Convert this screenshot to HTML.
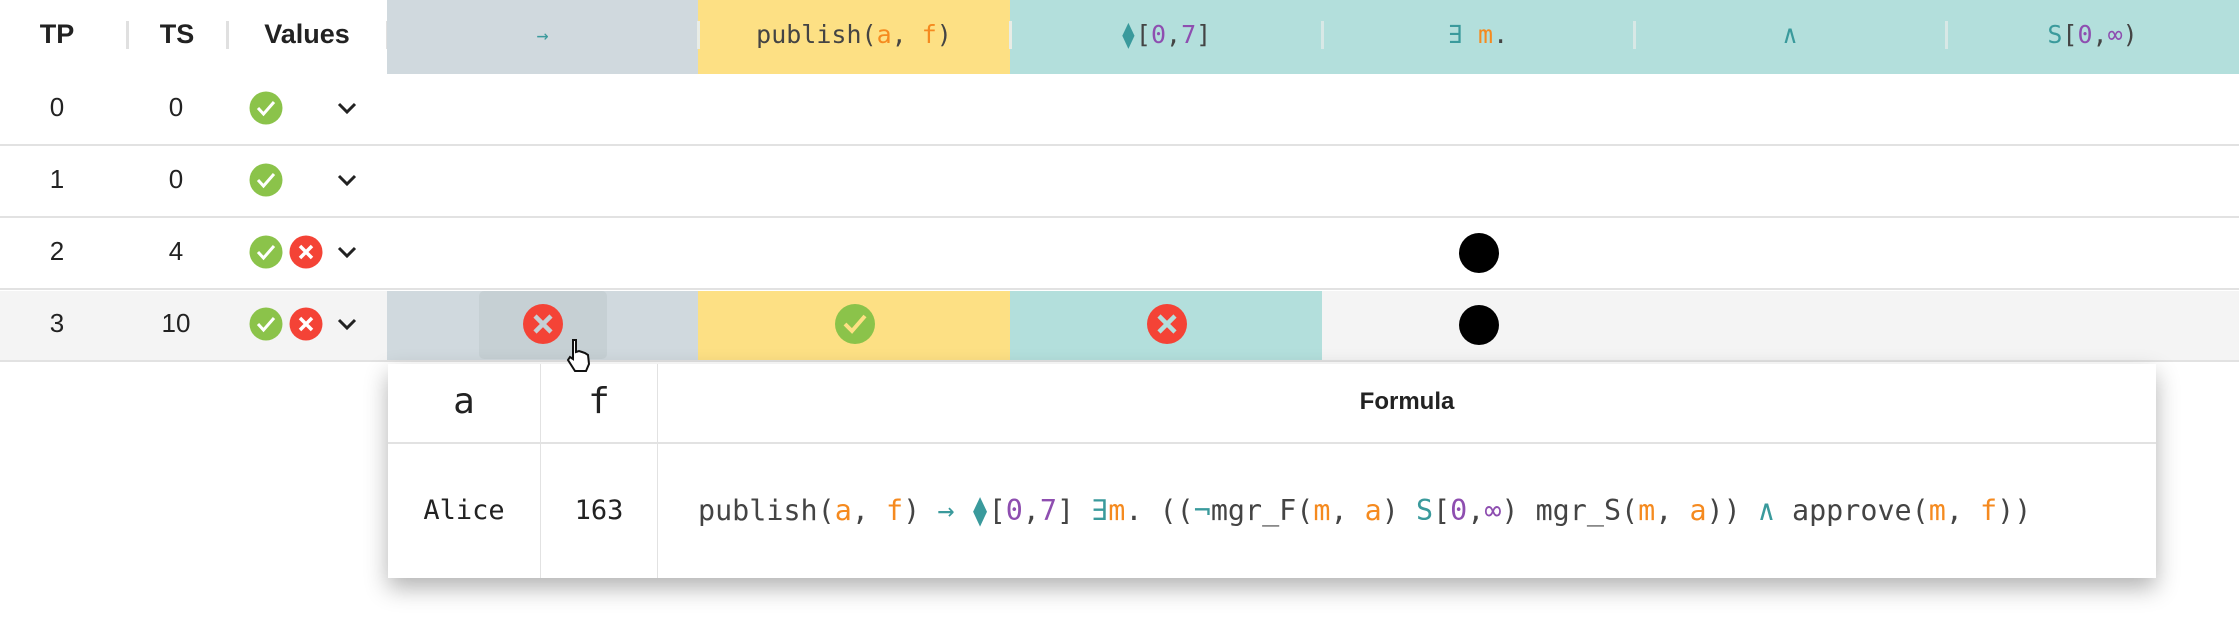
<!DOCTYPE html>
<html><head><meta charset="utf-8"><style>
body{margin:0;width:2239px;height:634px;background:#fff;position:relative;overflow:hidden;font-family:"Liberation Sans",sans-serif;color:#222}
.a{position:absolute}
.mono{font-family:"DejaVu Sans Mono","Liberation Mono",monospace}
.o{color:#f58a1f}.p{color:#8e4eb0}.t{color:#3a9a9c}.k{color:#444}
.hd{position:absolute;top:0;height:74px;line-height:70px;text-align:center;font-size:25px;color:#444}
.div{position:absolute;top:21px;width:3px;height:28px;background:#e0e0e0}
.line{position:absolute;left:0;width:2239px;height:2px;background:#e2e2e2}
.num{position:absolute;font-size:26px;text-align:center;width:100px;color:#222}
</style></head><body>
<div class="a" style="left:14px;width:86px;top:0;line-height:68px;text-align:center;font-weight:bold;font-size:27px">TP</div>
<div class="a" style="left:128px;width:98px;top:0;line-height:68px;text-align:center;font-weight:bold;font-size:27px">TS</div>
<div class="a" style="left:229px;width:156px;top:0;line-height:68px;text-align:center;font-weight:bold;font-size:27px">Values</div>
<div class="div" style="left:126px"></div><div class="div" style="left:226px"></div><div class="div" style="left:386px"></div>
<div class="hd mono" style="left:387px;width:311px;background:#d0d9de;font-size:20px"><span class="t">→</span></div>
<div class="hd mono" style="left:698px;width:312px;background:#fde084">publish(<span class="o">a</span>, <span class="o">f</span>)</div>
<div class="hd mono" style="left:1010px;width:1229px;background:#b3dfdc"></div>
<div class="hd mono" style="left:1010px;width:312px;"><span class="t">⧫</span>[<span class="p">0</span>,<span class="p">7</span>]</div>
<div class="hd mono" style="left:1322px;width:312px;"><span class="t">∃</span> <span class="o">m</span>.</div>
<div class="hd mono" style="left:1634px;width:312px;"><span class="t">∧</span></div>
<div class="hd mono" style="left:1946px;width:293px;"><span class="t">S</span>[<span class="p">0</span>,<span class="p">∞</span>)</div>
<div class="div" style="left:1321px;background:#d8e8e6"></div><div class="div" style="left:1633px;background:#d8e8e6"></div><div class="div" style="left:1945px;background:#d8e8e6"></div>
<div class="div" style="left:697px;background:#e8ece6"></div><div class="div" style="left:1009px;background:#e8ece6"></div>

<div class="a" style="left:0;top:291px;width:2239px;height:70px;background:#f4f4f4"></div>
<div class="a" style="left:387px;top:291px;width:311px;height:70px;background:#d0d9de"></div>
<div class="a" style="left:479px;top:291px;width:128px;height:68px;background:#c6d0d4;border-radius:5px"></div>
<div class="a" style="left:698px;top:291px;width:312px;height:70px;background:#fde084"></div>
<div class="a" style="left:1010px;top:291px;width:312px;height:70px;background:#b3dfdc"></div>
<div class="line" style="top:144px"></div><div class="line" style="top:216px"></div><div class="line" style="top:288px"></div><div class="line" style="top:360px"></div>

<div class="num" style="left:7px;top:92px">0</div><div class="num" style="left:126px;top:92px">0</div>
<div class="num" style="left:7px;top:164px">1</div><div class="num" style="left:126px;top:164px">0</div>
<div class="num" style="left:7px;top:236px">2</div><div class="num" style="left:126px;top:236px">4</div>
<div class="num" style="left:7px;top:308px">3</div><div class="num" style="left:126px;top:308px">10</div>

<svg class="a" style="left:0;top:0" width="2239" height="400">
<defs>
<g id="ck"><circle r="16.5" fill="#8bc34a"/><path d="M-8 0 L-2.5 6 L8 -6" fill="none" stroke="#fff" stroke-width="3"/></g>
<g id="xx"><circle r="16.5" fill="#f44336"/><path d="M-6 -6 L6 6 M6 -6 L-6 6" stroke="#fff" stroke-width="3.5"/></g>
<path id="ch" d="M-8 -4 L0 4 L8 -4" fill="none" stroke="#222" stroke-width="3"/>
</defs>
<use href="#ck" x="266" y="108"/><use href="#ch" x="347" y="108"/>
<use href="#ck" x="266" y="180"/><use href="#ch" x="347" y="180"/>
<use href="#ck" x="266" y="252"/><use href="#xx" x="306" y="252"/><use href="#ch" x="347" y="252"/>
<use href="#ck" x="266" y="324"/><use href="#xx" x="306" y="324"/><use href="#ch" x="347" y="324"/>
<circle cx="543" cy="324" r="20" fill="#f44336"/><path d="M535 316 L551 332 M551 316 L535 332" stroke="#c6d0d4" stroke-width="4.5"/>
<circle cx="855" cy="324" r="20" fill="#8bc34a"/><path d="M845 324 L852 331 L865 316" fill="none" stroke="#fde084" stroke-width="4"/>
<circle cx="1167" cy="324" r="20" fill="#f44336"/><path d="M1159 316 L1175 332 M1175 316 L1159 332" stroke="#b3dfdc" stroke-width="4.5"/>
<circle cx="1479" cy="253" r="20" fill="#000"/>
<circle cx="1479" cy="325" r="20" fill="#000"/>
</svg>

<div class="a" style="left:388px;top:364px;width:1768px;height:214px;background:#fff;box-shadow:0 10px 22px rgba(0,0,0,.3)">
  <div class="a" style="left:0;top:78px;width:1768px;height:2px;background:#e2e2e2"></div>
  <div class="a" style="left:152px;top:0;width:1px;height:214px;background:#e2e2e2"></div>
  <div class="a" style="left:269px;top:0;width:1px;height:214px;background:#e2e2e2"></div>
  <div class="a mono" style="left:0;width:152px;top:0;line-height:76px;text-align:center;font-size:36px">a</div>
  <div class="a mono" style="left:153px;width:116px;top:0;line-height:76px;text-align:center;font-size:36px">f</div>
  <div class="a" style="left:270px;width:1498px;top:0;line-height:76px;text-align:center;font-size:24px;font-weight:bold">Formula</div>
  <div class="a mono" style="left:0;width:152px;top:80px;line-height:134px;text-align:center;font-size:27px">Alice</div>
  <div class="a mono" style="left:153px;width:116px;top:80px;line-height:134px;text-align:center;font-size:27px">163</div>
  <div class="a mono k" style="left:310px;top:80px;line-height:134px;font-size:28.4px;white-space:nowrap">publish(<span class="o">a</span>, <span class="o">f</span>) <span class="t">→</span> <span class="t">⧫</span>[<span class="p">0</span>,<span class="p">7</span>] <span class="t">∃</span><span class="o">m</span>. ((<span class="t">¬</span>mgr_F(<span class="o">m</span>, <span class="o">a</span>) <span class="t">S</span>[<span class="p">0</span>,<span class="p">∞</span>) mgr_S(<span class="o">m</span>, <span class="o">a</span>)) <span class="t">∧</span> approve(<span class="o">m</span>, <span class="o">f</span>))</div>
</div>
<svg class="a" style="left:565px;top:338px" width="30" height="36"><path d="M8 2 L11 2 L11 14 L14 13 L17 14 L20 15 L23 17 L24 26 L21 33 L10 33 L3 22 L5 19 L8 21 Z" fill="#fff" stroke="#111" stroke-width="2"/></svg>
</body></html>
